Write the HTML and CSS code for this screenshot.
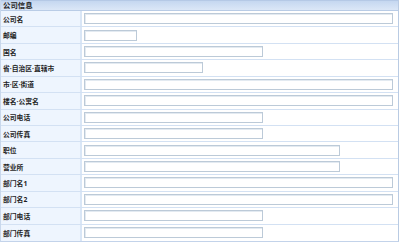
FILE: index.html
```html
<!DOCTYPE html>
<html lang="zh-CN">
<head>
<meta charset="utf-8">
<title>公司信息</title>
<link rel="stylesheet" href="styles.css">
</head>
<body>
<div class="panel">
  <div class="panel-head">公司信息</div>
  <div class="panel-body">
    <div class="row"><div class="label">公司名</div><div class="value"><span class="field w-full"></span></div></div>
    <div class="row"><div class="label">邮编</div><div class="value"><span class="field w-xs"></span></div></div>
    <div class="row"><div class="label">国名</div><div class="value"><span class="field w-m"></span></div></div>
    <div class="row"><div class="label">省·自治区·直辖市</div><div class="value"><span class="field w-s"></span></div></div>
    <div class="row"><div class="label">市·区·街道</div><div class="value"><span class="field w-full"></span></div></div>
    <div class="row"><div class="label">楼名·公寓名</div><div class="value"><span class="field w-full"></span></div></div>
    <div class="row"><div class="label">公司电话</div><div class="value"><span class="field w-m"></span></div></div>
    <div class="row"><div class="label">公司传真</div><div class="value"><span class="field w-m"></span></div></div>
    <div class="row"><div class="label">职位</div><div class="value"><span class="field w-l"></span></div></div>
    <div class="row"><div class="label">营业所</div><div class="value"><span class="field w-l"></span></div></div>
    <div class="row"><div class="label">部门名1</div><div class="value"><span class="field w-full"></span></div></div>
    <div class="row"><div class="label">部门名2</div><div class="value"><span class="field w-full"></span></div></div>
    <div class="row"><div class="label">部门电话</div><div class="value"><span class="field w-m"></span></div></div>
    <div class="row"><div class="label">部门传真</div><div class="value"><span class="field w-m"></span></div></div>
  </div>
</div>
</body>
</html>
```
FILE: styles.css
```css
html, body {
  margin: 0;
  padding: 0;
  background: #ffffff;
}
body {
  font-family: "Noto Sans", "Noto Sans CJK SC", sans-serif;
  color: #1a1a1a;
}
.panel {
  width: 399px;
  height: 242px;
  box-sizing: border-box;
  border-left: 1px solid #c9d8ec;
  border-right: 1px solid #b9cbe3;
  border-bottom: 1px solid #c3d3ea;
  display: flex;
  flex-direction: column;
}
.panel-head {
  height: 11px;
  box-sizing: border-box;
  border-top: 1px solid #b5c9e6;
  border-bottom: 1px solid #b9cce6;
  background: linear-gradient(#c5d7f0, #dbe7f7);
  font-size: 7.4px;
  font-weight: bold;
  line-height: 9px;
  padding-left: 2px;
  color: #222;
}
.panel-body {
  flex: 1;
  display: grid;
  grid-template-rows: repeat(14, 1fr);
}
.row {
  display: grid;
  grid-template-columns: 81px 1fr;
  border-bottom: 1px solid #d3e1f3;
  min-height: 0;
}
.row:last-child {
  border-bottom: none;
}
.label {
  background: #eef5fe;
  border-right: 2px solid #d9e6f6;
  font-size: 6.8px;
  font-weight: bold;
  display: flex;
  align-items: center;
  padding-left: 2px;
  white-space: nowrap;
  color: #1f1f1f;
}
.value {
  display: flex;
  align-items: center;
  padding-left: 2px;
}
.field {
  display: block;
  height: 11px;
  box-sizing: border-box;
  border: 1px solid #bccad8;
  box-shadow: inset 1px 1px 0 #e3eaf1;
  background: #fff;
}
.w-xs { width: 53px; }
.w-s { width: 119px; }
.w-m { width: 179px; }
.w-l { width: 256px; }
.w-full { width: 309px; }
```
